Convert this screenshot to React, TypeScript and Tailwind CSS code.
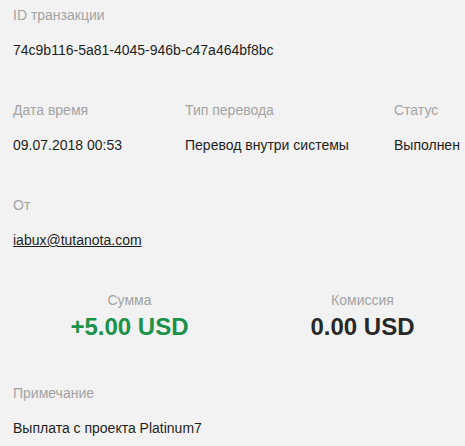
export default function App() {
  const label = "text-[14px] leading-[20px] text-[#a3a3a3]";
  const value = "text-[14px] leading-[20px] text-[#1f1f1f]";
  return (
    <div
      className="w-[465px] h-[446px] overflow-hidden bg-[#f2f2f2] pl-[13px] pt-[5px]"
      style={{ fontFamily: '"Liberation Sans", Arial, sans-serif' }}
    >
      <div className="mb-[40px]">
        <div className={`${label} mb-[15px]`}>ID транзакции</div>
        <div className={value}>74c9b116-5a81-4045-946b-c47a464bf8bc</div>
      </div>
      <div className="mb-[40px] flex">
        <div className="w-[172px] shrink-0">
          <div className={`${label} mb-[15px]`}>Дата время</div>
          <div className={value}>09.07.2018 00:53</div>
        </div>
        <div className="w-[209px] shrink-0">
          <div className={`${label} mb-[15px]`}>Тип перевода</div>
          <div className={value}>Перевод внутри системы</div>
        </div>
        <div className="shrink-0">
          <div className={`${label} mb-[15px]`}>Статус</div>
          <div className={value}>Выполнен</div>
        </div>
      </div>
      <div className="mb-[40px]">
        <div className={`${label} mb-[15px]`}>От</div>
        <div className={value}>
          <a className="underline">iabux@tutanota.com</a>
        </div>
      </div>
      <div className="mb-[42px] flex">
        <div className="w-[233px] shrink-0 text-center">
          <div className={`${label} mb-[3px]`}>Сумма</div>
          <div className="text-[24px] leading-[28px] font-bold text-[#1b9149]">+5.00 USD</div>
        </div>
        <div className="w-[233px] shrink-0 text-center">
          <div className={`${label} mb-[3px]`}>Комиссия</div>
          <div className="text-[24px] leading-[28px] font-bold text-[#282828]">0.00 USD</div>
        </div>
      </div>
      <div>
        <div className={`${label} mb-[15px]`}>Примечание</div>
        <div className={value}>Выплата с проекта Platinum7</div>
      </div>
    </div>
  );
}
